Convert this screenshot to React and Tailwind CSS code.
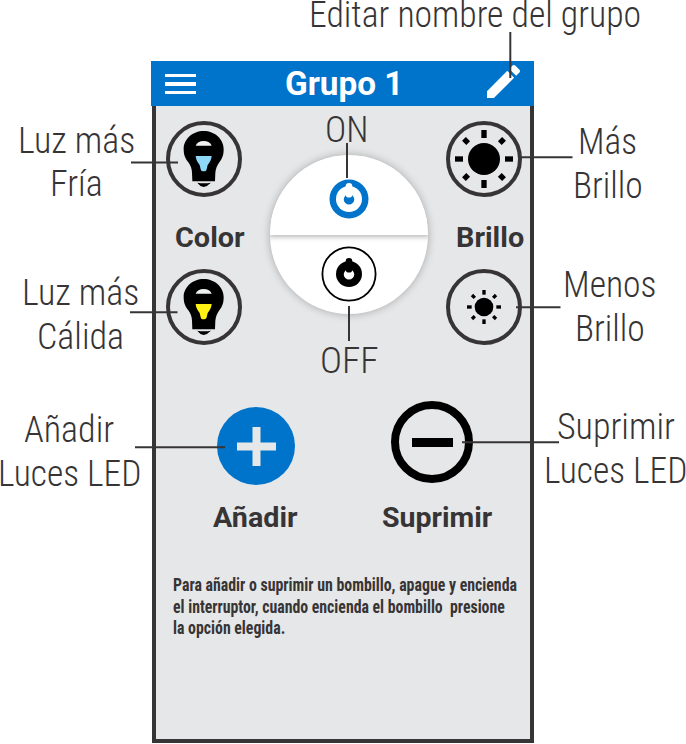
import { useLayoutEffect, useRef, useState } from "react";

// Text set on one line and condensed to the width of its box.
function Fit({ children, className = "" }) {
  const ref = useRef(null);
  const [ratio, setRatio] = useState(1);
  useLayoutEffect(() => {
    const el = ref.current;
    setRatio(el.parentElement.getBoundingClientRect().width / el.offsetWidth);
  }, []);
  return (
    <div className={`flex justify-start ${className}`}>
      <span
        ref={ref}
        className="block shrink-0 origin-left whitespace-pre"
        style={{ transform: `scaleX(${ratio})` }}
      >
        {children}
      </span>
    </div>
  );
}

function Bulb({ light }) {
  return (
    <div className="size-[76px] rounded-full border-4 border-[#373435]">
      <svg className="block size-[68px]" viewBox="45 44 204 204">
        <path
          d="M146 62C113 62 86 86 86 116C86 136 92 145 100 156C107 166 111 176 111 187L112 213H180L181 187C182 176 186 166 193 156C201 145 206 136 206 116C206 86 179 62 146 62Z"
          fill="#000"
        />
        <path d="M122 106C125 97 134 92 146 92C158 92 167 97 170 106Z" fill="#eff0f1" />
        <path
          d="M122 137H170C169 149 164 156 158 164L155 177C154 182 151 183 146 183C141 183 138 182 137 177L134 164C128 156 123 149 122 137Z"
          fill={light}
        />
        <path d="M127 217Q146 220 168 217L162 222Q156 230 146 230Q136 230 131 222Z" fill="#000" />
      </svg>
    </div>
  );
}

const ANGLES = [0, 45, 90, 135, 180, 225, 270, 315];

function Sun({ r, inner, outer, width, dIn, dOut }) {
  return (
    <div className="size-[76px] rounded-full border-4 border-[#373435]">
      <svg className="block size-[68px]" viewBox="-102 -102 204 204">
        <circle r={r} />
        {ANGLES.map((a) => {
          const diagonal = a % 90 !== 0;
          const from = diagonal ? dIn : inner;
          const to = diagonal ? dOut : outer;
          return (
            <rect key={a} x={-width / 2} y={-to} width={width} height={to - from} transform={`rotate(${a})`} />
          );
        })}
      </svg>
    </div>
  );
}

function Power({ ink, hole }) {
  return (
    <>
      <circle r="13" fill={ink} />
      <circle cy="-12.6" r="3.3" fill={ink} />
      <circle r="5.2" cy="0.4" fill={hole} />
      <circle cy="-4.6" r="3.2" fill={ink} />
    </>
  );
}

const LEADERS = [
  [510.3, 32, 510.3, 78],
  [347, 143, 347, 178],
  [349, 306, 349, 341],
  [131, 162.6, 178, 162.6],
  [130, 312.3, 177.5, 312.3],
  [521, 157.3, 572.5, 157.3],
  [516, 307.3, 560.5, 307.3],
  [135, 447.3, 225, 447.3],
  [462, 442.3, 559, 442.3],
];

export default function App() {
  return (
    <div className="relative flex h-[744px] w-[686px] overflow-hidden bg-white font-['Roboto_Condensed','Roboto',sans-serif] text-[36px] font-light leading-[44px] text-[#373435] [font-stretch:75%]">
      <div className="flex w-[151px] shrink-0 flex-col pt-[120px]">
        <div className="leading-[43px]">
          <Fit className="ml-[18px] w-[117px]">Luz más</Fit>
          <Fit className="ml-[50px] w-[53px]">Fría</Fit>
        </div>
        <div className="mt-[65px]">
          <Fit className="ml-[22px] w-[117px]">Luz más</Fit>
          <Fit className="ml-[37px] w-[87px]">Cálida</Fit>
        </div>
        <div className="mt-[49px]">
          <Fit className="ml-[24px] w-[90px]">Añadir</Fit>
          <Fit className="ml-[-2px] w-[143px]">Luces LED</Fit>
        </div>
      </div>

      <div className="flex w-[383px] shrink-0 flex-col">
        <div className="h-[61px] leading-[30px]">
          <Fit className="ml-[158px] w-[332px]">Editar nombre del grupo</Fit>
        </div>
        <header className="flex h-[45px] shrink-0 items-center justify-between bg-[#0073cb] pr-[14px] pl-[14px] text-white">
          <div className="mt-px flex flex-col gap-[5px]">
            <div className="h-[3.6px] w-[31px] bg-white" />
            <div className="h-[3.6px] w-[31px] bg-white" />
            <div className="h-[3.6px] w-[31px] bg-white" />
          </div>
          <Fit className="ml-[5px] w-[118px] font-['Roboto',sans-serif] text-[33px] font-bold leading-[45px] [font-stretch:100%]">Grupo 1</Fit>
          <svg className="mb-[5px] size-[33px]" viewBox="3 3 18 18" fill="currentColor">
            <path d="M3 17.25V21h3.75L17.81 9.94l-3.75-3.75L3 17.25zM20.71 7.04c.39-.39.39-1.02 0-1.41l-2.34-2.34c-.39-.39-1.02-.39-1.41 0l-1.83 1.83 3.75 3.75 1.83-1.83z" />
          </svg>
        </header>

        <main className="ml-px h-[637px] border-x-4 border-b-4 border-[#373435] bg-[#e6e7e8]">
          <section className="flex h-[289px]">
            <div className="ml-[10px] flex w-[88px] flex-col pt-[15px]">
              <Bulb light="#8fd8f8" />
              <Fit className="mt-[27px] ml-[9px] w-[70px] font-['Roboto',sans-serif] text-[28px] font-bold leading-[28px] [font-stretch:100%]">Color</Fit>
              <div className="mt-[17px]">
                <Bulb light="#fff212" />
              </div>
            </div>

            <div className="ml-[16px] flex w-[158px] flex-col">
              <Fit className="mt-[2px] ml-[55px] w-[43px]">ON</Fit>
              <div className="mt-[3px] h-[159px] overflow-hidden rounded-full bg-white shadow-[0_0_9px_rgba(0,0,0,0.28)]">
                <div className="flex h-[80px] justify-center bg-white pt-[24px] shadow-[0_1px_5px_1px_rgba(0,0,0,0.28)]">
                  <svg className="size-[40px]" viewBox="-20 -20 40 40">
                    <circle r="19.5" fill="#0073cb" />
                    <Power ink="#fff" hole="#0073cb" />
                  </svg>
                </div>
                <div className="flex justify-center pt-[11px]">
                  <svg className="size-[56px]" viewBox="-28 -28 56 56">
                    <circle r="26.6" fill="none" stroke="#000" strokeWidth="1.8" />
                    <Power ink="#000" hole="#fff" />
                  </svg>
                </div>
              </div>
              <Fit className="mt-[25px] ml-[50px] w-[59px]">OFF</Fit>
            </div>

            <div className="ml-[18px] flex w-[78px] flex-col pt-[15px]">
              <Sun r={48} inner={63} outer={87} width={16} dIn={67} dOut={85} />
              <Fit className="mt-[27px] ml-[10px] w-[68px] font-['Roboto',sans-serif] text-[28px] font-bold leading-[28px] [font-stretch:100%]">Brillo</Fit>
              <div className="mt-[17px]">
                <Sun r={28} inner={37} outer={51} width={10} dIn={39} dOut={51} />
              </div>
            </div>
          </section>

          <section className="flex h-[177px]">
            <div className="ml-[57px] flex w-[86px] flex-col pt-[12px]">
              <div className="ml-[4px] flex size-[78px] items-center justify-center rounded-full bg-[#0073cb]">
                <svg className="size-[39px]" viewBox="0 0 39 39" stroke="#e6e7e8" strokeWidth="8">
                  <path d="M19.5 0v39M0 19.5h39" />
                </svg>
              </div>
              <Fit className="mt-[19px] w-[84px] font-['Roboto',sans-serif] text-[28px] font-bold leading-[28px] [font-stretch:100%]">Añadir</Fit>
            </div>
            <div className="ml-[82px] flex w-[112px] flex-col pt-[6px]">
              <div className="ml-[10px] flex size-[82px] items-center justify-center rounded-full border-[8px] border-black">
                <div className="h-[9px] w-[41px] bg-black" />
              </div>
              <Fit className="mt-[21px] ml-px w-[110px] font-['Roboto',sans-serif] text-[28px] font-bold leading-[28px] [font-stretch:100%]">Suprimir</Fit>
            </div>
          </section>

          <section className="ml-[17px] pt-[3px] text-[17.5px] font-bold leading-[21.7px]">
            <Fit className="w-[344px]">Para añadir o suprimir un bombillo, apague y encienda</Fit>
            <Fit className="w-[332px]">el interruptor, cuando encienda el bombillo  presione</Fit>
            <Fit className="w-[112px]">la opción elegida.</Fit>
          </section>
        </main>
      </div>

      <div className="flex w-[152px] shrink-0 flex-col pt-[120px]">
        <div>
          <Fit className="ml-[44px] w-[59px]">Más</Fit>
          <Fit className="ml-[39px] w-[70px]">Brillo</Fit>
        </div>
        <div className="mt-[55px]">
          <Fit className="ml-[29px] w-[94px]">Menos</Fit>
          <Fit className="ml-[41px] w-[70px]">Brillo</Fit>
        </div>
        <div className="mt-[54px]">
          <Fit className="ml-[23px] w-[118px]">Suprimir</Fit>
          <Fit className="ml-[10px] w-[143px]">Luces LED</Fit>
        </div>
      </div>

      <svg className="pointer-events-none absolute inset-0 h-full w-full" viewBox="0 0 686 744">
        {LEADERS.map(([x1, y1, x2, y2]) => (
          <line key={`${x1}-${y1}`} x1={x1} y1={y1} x2={x2} y2={y2} stroke="#373435" strokeWidth="2" />
        ))}
      </svg>
    </div>
  );
}
